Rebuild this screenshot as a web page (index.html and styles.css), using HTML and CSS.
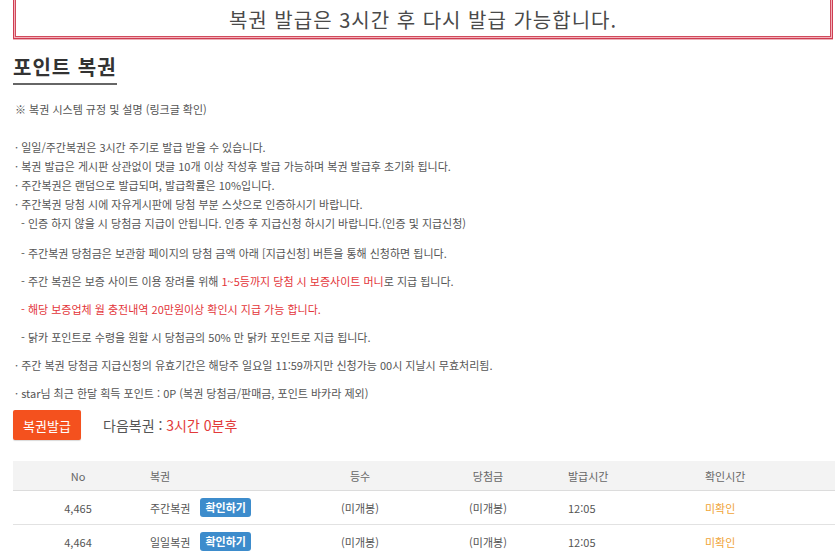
FILE: index.html
```html
<!DOCTYPE html>
<html lang="ko">
<head>
<meta charset="utf-8">
<link rel="stylesheet" href="styles.css">
</head>
<body>
<div class="page">
  <div class="notice">복권 발급은 3시간 후 다시 발급 가능합니다.</div>

  <h2 class="title">포인트 복권</h2>

  <div class="rules">
    <p>※ 복권 시스템 규정 및 설명 (링크글 확인)</p>
    <p class="blank">&nbsp;</p>
    <p>· 일일/주간복권은 3시간 주기로 발급 받을 수 있습니다.</p>
    <p>· 복권 발급은 게시판 상관없이 댓글 10개 이상 작성후 발급 가능하며 복권 발급후 초기화 됩니다.</p>
    <p>· 주간복권은 랜덤으로 발급되며, 발급확률은 10%입니다.</p>
    <p>· 주간복권 당첨 시에 자유게시판에 당첨 부분 스샷으로 인증하시기 바랍니다.</p>
    <p class="ind">- 인증 하지 않을 시 당첨금 지급이 안됩니다. 인증 후 지급신청 하시기 바랍니다.(인증 및 지급신청)</p>
  </div>
  <div class="rules2">
    <p class="ind first">- 주간복권 당첨금은 보관함 페이지의 당첨 금액 아래 [지급신청] 버튼을 통해 신청하면 됩니다.</p>
    <p class="ind">- 주간 복권은 보증 사이트 이용 장려를 위해 <span class="red">1~5등까지 당첨 시 보증사이트 머니</span>로 지급 됩니다.</p>
    <p class="ind red">- 해당 보증업체 월 충전내역 20만원이상 확인시 지급 가능 합니다.</p>
    <p class="ind">- 닭카 포인트로 수령을 원할 시 당첨금의 50% 만 닭카 포인트로 지급 됩니다.</p>
    <p>· 주간 복권 당첨금 지급신청의 유효기간은 해당주 일요일 11:59까지만 신청가능 00시 지날시 무효처리됨.</p>
    <p>· star님 최근 한달 획득 포인트 : 0P (복권 당첨금/판매금, 포인트 바카라 제외)</p>
  </div>

  <div class="issue">
    <button class="issue-btn">복권발급</button>
    <span class="next">다음복권 : <span class="next-red">3시간 0분후</span></span>
  </div>

  <div class="table">
    <div class="row head">
      <div class="c1">No</div>
      <div class="c2">복권</div>
      <div class="c3">등수</div>
      <div class="c4">당첨금</div>
      <div class="c5">발급시간</div>
      <div class="c6">확인시간</div>
    </div>
    <div class="row">
      <div class="c1">4,465</div>
      <div class="c2">주간복권 <span class="chk">확인하기</span></div>
      <div class="c3">(미개봉)</div>
      <div class="c4">(미개봉)</div>
      <div class="c5">12:05</div>
      <div class="c6 orange">미확인</div>
    </div>
    <div class="row">
      <div class="c1">4,464</div>
      <div class="c2">일일복권 <span class="chk">확인하기</span></div>
      <div class="c3">(미개봉)</div>
      <div class="c4">(미개봉)</div>
      <div class="c5">12:05</div>
      <div class="c6 orange">미확인</div>
    </div>
  </div>
</div>
</body>
</html>
```

FILE: styles.css
```css
html, body {
  margin: 0;
  padding: 0;
  background: #fff;
  overflow: hidden;
}
body {
  font-family: "Noto Sans CJK KR", "Noto Sans", sans-serif;
  color: #555;
}
.page {
  padding: 0 2px 0 13px;
}
.notice {
  margin-top: -3px;
  height: 37px;
  border: 1px solid #cf3d52;
  box-shadow: inset 0 0 0 1px #f2b3bc, inset 0 0 0 2px #d14a5c, 0 1px 0 #ebb0b8;
  display: flex;
  align-items: center;
  justify-content: center;
  padding-top: 3px;
  font-size: 20px;
  color: #4a4a4a;
  letter-spacing: 1px;
}
.title {
  display: inline-block;
  margin: 16px 0 0;
  font-size: 20px;
  line-height: 24px;
  font-weight: bold;
  color: #333;
  letter-spacing: 1px;
  padding-bottom: 4px;
  border-bottom: 2px solid #666;
}
.rules {
  margin-top: 15px;
  font-size: 11px;
  line-height: 19px;
}
.rules p, .rules2 p {
  margin: 0;
  padding-left: 2px;
  white-space: nowrap;
}
.rules2 {
  font-size: 11px;
  line-height: 28px;
}
.rules2 .first {
  margin-top: 6px;
}
.ind {
  padding-left: 8px !important;
}
.red {
  color: #e3353a;
}
.issue {
  display: flex;
  align-items: center;
  margin-top: 3px;
}
.issue-btn {
  width: 68px;
  height: 30px;
  border: 0;
  border-radius: 2px;
  background: #f4511e;
  color: #fff;
  font-family: inherit;
  font-size: 13px;
  padding: 0;
  box-shadow: 0 1px 1px rgba(0,0,0,0.15);
}
.next {
  margin-left: 22px;
  font-size: 14px;
  color: #555;
}
.next-red {
  color: #e23a3a;
}
.table {
  margin-top: 21px;
  margin-right: -2px;
  font-size: 11px;
}
.row {
  display: grid;
  grid-template-columns: 130px 147px 140px 116px 144px 1fr;
  height: 33px;
  align-items: center;
  border-bottom: 1px solid #e2e2e2;
  color: #555;
}
.row.head {
  height: 29px;
  background: #f3f3f3;
  color: #666;
  border-bottom: 1px solid #dcdcdc;
}
.c1, .c3, .c4 {
  text-align: center;
}
.c2 {
  padding-left: 7px;
  display: flex;
  align-items: center;
  gap: 10px;
}
.c5 {
  padding-left: 22px;
}
.c6 {
  padding-left: 15px;
}
.chk {
  display: inline-block;
  background: #3d8ccc;
  color: #fff;
  font-weight: bold;
  font-size: 11px;
  line-height: 19px;
  padding: 0 5px;
  border-radius: 3px;
}
.orange {
  color: #f0a437;
}
```
